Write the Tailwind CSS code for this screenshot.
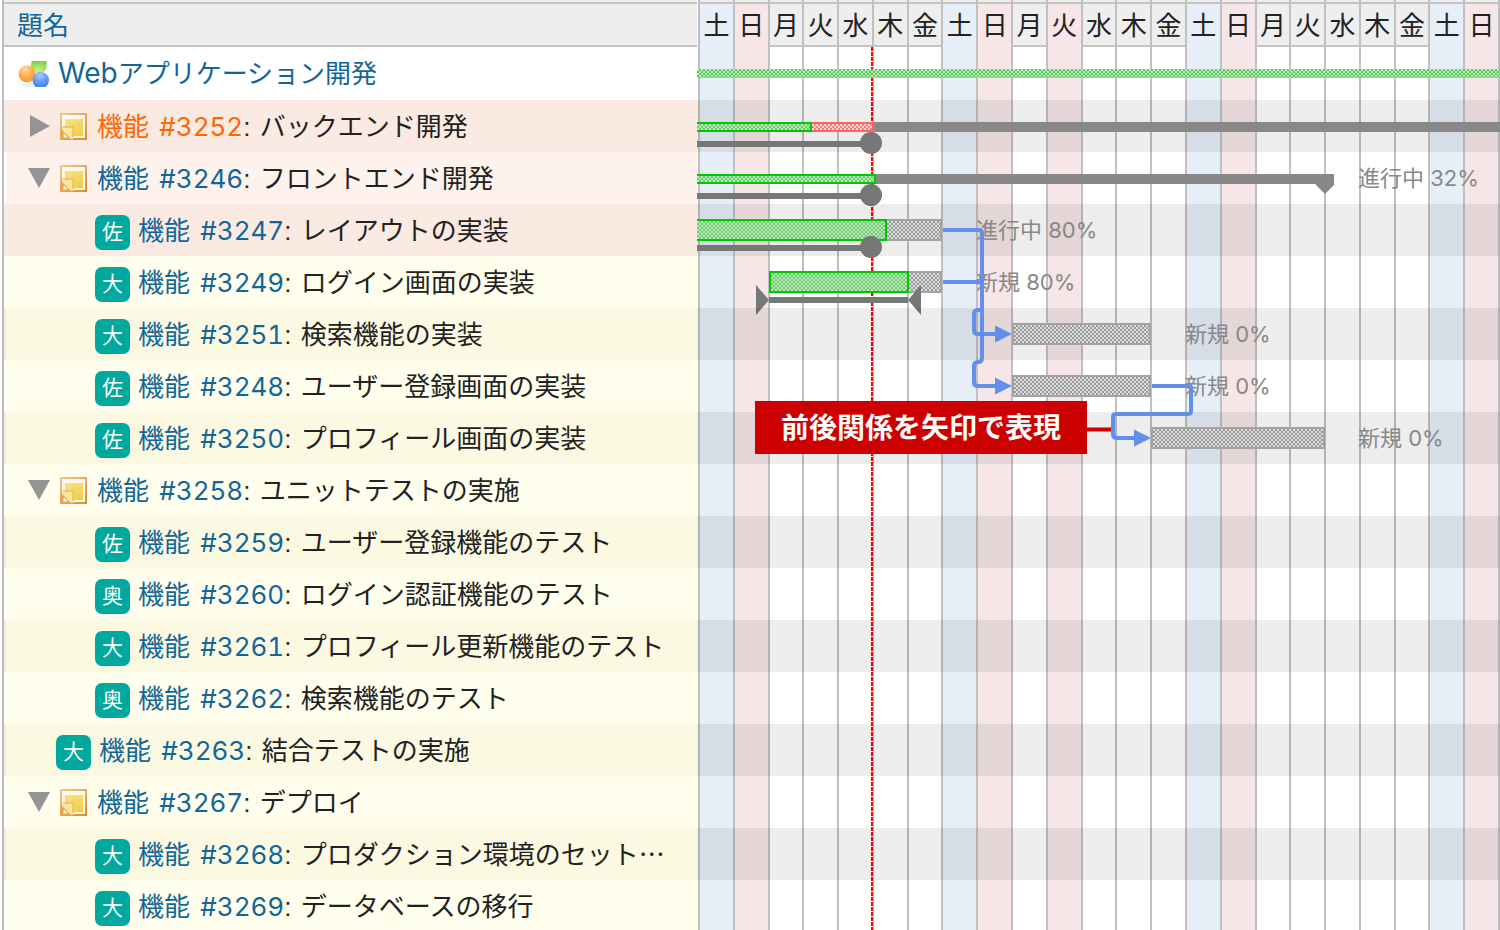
<!DOCTYPE html>
<html lang="ja">
<head>
<meta charset="utf-8">
<title>ガントチャート</title>
<script src="https://cdn.jsdelivr.net/npm/@tailwindcss/browser@4"></script>
</head>
<body class="h-screen overflow-hidden bg-white font-[Inter,'Noto_Sans_CJK_JP',sans-serif] text-[26px] leading-[52px] text-[#222]">
<svg class="absolute h-0 w-0" aria-hidden="true">
  <defs>
    <linearGradient id="noteEdge" x1="0" y1="0" x2="1" y2="1"><stop offset="0" stop-color="#f4c48a"/><stop offset="1" stop-color="#e28a2a"/></linearGradient>
    <linearGradient id="noteFace" x1="0" y1="0" x2="0.6" y2="1"><stop offset="0" stop-color="#fae28c"/><stop offset="1" stop-color="#f2cf48"/></linearGradient>
    <radialGradient id="ballOrange" cx=".4" cy=".25" r=".75"><stop offset="0" stop-color="#ffd9a6"/><stop offset=".6" stop-color="#ffab40"/><stop offset="1" stop-color="#f79a45"/></radialGradient>
    <radialGradient id="ballGreen" cx=".45" cy=".8" r=".8"><stop offset="0" stop-color="#ccf58c"/><stop offset="1" stop-color="#7ccf3c"/></radialGradient>
    <radialGradient id="ballBlue" cx=".45" cy=".25" r=".8"><stop offset="0" stop-color="#a6ccff"/><stop offset=".6" stop-color="#5a97fa"/><stop offset="1" stop-color="#3f7de8"/></radialGradient>
    <symbol id="note" viewBox="0 0 27 27">
      <rect x="1" y="1" width="25" height="25" fill="#fffaf0" stroke="url(#noteEdge)" stroke-width="2"/>
      <path d="M5 6h18v17H12L5 15z" fill="url(#noteFace)"/>
      <path d="M2 14h11v12H2z" fill="#fbe69c"/>
      <path d="M3 14h10v10" fill="none" stroke="#ecb968" stroke-width="1.500"/>
      <path d="M1 16l10 10H1z" fill="#e9a04a"/>
      <path d="M3.500 20l4.500 4.500H3.500z" fill="#fff3d8"/>
    </symbol>
    <symbol id="project" viewBox="0 0 32 28">
      <ellipse cx="15" cy="25" rx="14" ry="2" fill="#000" opacity=".06"/>
      <path d="M14 1h14.500v6q-1 6-7.500 6t-8-6q0-4 1-6z" fill="url(#ballGreen)"/>
      <circle cx="9" cy="14" r="8.500" fill="url(#ballOrange)"/>
      <path d="M14.500 20a8.250 8 0 0 1 16.500 0q0 4-3.500 7h-9.500q-3.500-3-3.500-7z" fill="url(#ballBlue)"/>
    </symbol>
  </defs>
</svg>

<div class="grid min-h-screen grid-cols-[697fr_803fr]">
  <section class="ml-[2px] min-w-0 border-l-2 border-[#bdbdbd]">
    <div class="h-[4px] border-b-2 border-[#c4c4c4] bg-[#eee]"></div>
    <h2 class="h-[43px] border-b-2 border-[#c4c4c4] bg-[#eee] pl-[13px] text-[26px] leading-[43px] font-normal text-[#169]">題名</h2>
    <div class="flex h-[53px] items-center pl-[14px]">
      <svg class="mr-[8px] h-[28px] w-[32px] shrink-0"><use href="#project"/></svg>
      <a href="#project-page" class="truncate text-[#169]"><span class="text-[28px]">Web</span>アプリケーション開発</a>
    </div>
    <ul id="issues"></ul>
  </section>

  <section class="relative min-w-0 overflow-hidden">
    <div id="days" class="absolute inset-y-0 right-[2px] left-[1px] grid grid-cols-[repeat(23,minmax(0,1fr))]"></div>
    <div class="absolute inset-y-0 right-0 w-[2px] bg-[#c0c0c0]"></div>
    <div class="absolute top-[47px] bottom-0 left-[21.670%] w-[2px] bg-[repeating-linear-gradient(#f00_0_4px,#fff_4px_5px)]"></div>
    <div id="rows" class="relative pt-[48px]"></div>
    <svg class="absolute top-0 left-0 h-[930px] w-full" viewBox="697 0 803 930" preserveAspectRatio="none" aria-hidden="true">
      <path d="M1086 429.500H1112" stroke="#c00" stroke-width="4"/>
      <g fill="none" stroke="#628fea" stroke-width="4" stroke-linejoin="round">
        <path d="M943 230H979q3 0 3 3V358q0 4-4 4t-4 4V382q0 4 4 4H997"/>
        <path d="M943 282H982M982 310H978q-4 0-4 4V330q0 4 4 4H997"/>
        <path d="M1152 386H1188q3 0 3 3V411q0 3-3 3H1116q-3 0-3 3V434q0 4 4 4H1136"/>
      </g>
      <path d="M995 325.500V342.500L1012 334zM995 377.500V394.500L1012 386zM1134 429.500V446.500L1151 438z" fill="#628fea"/>
    </svg>
    <div class="absolute top-[401px] left-[7.223%] flex h-[53px] w-[41.345%] items-center justify-center bg-[#c00] text-[28px] font-bold whitespace-nowrap text-white">前後関係を矢印で表現</div>
  </section>
</div>

<script>
const issues = [
  ['closed', 3252, 'バックエンド開発'],
  ['open', 3246, 'フロントエンド開発'],
  ['佐', 3247, 'レイアウトの実装'],
  ['大', 3249, 'ログイン画面の実装'],
  ['大', 3251, '検索機能の実装'],
  ['佐', 3248, 'ユーザー登録画面の実装'],
  ['佐', 3250, 'プロフィール画面の実装'],
  ['open', 3258, 'ユニットテストの実施'],
  ['佐', 3259, 'ユーザー登録機能のテスト'],
  ['奥', 3260, 'ログイン認証機能のテスト'],
  ['大', 3261, 'プロフィール更新機能のテスト'],
  ['奥', 3262, '検索機能のテスト'],
  ['大', 3263, '結合テストの実施', true],
  ['open', 3267, 'デプロイ'],
  ['大', 3268, 'プロダクション環境のセット…'],
  ['大', 3269, 'データベースの移行'],
];
document.getElementById('issues').innerHTML = issues.map(([kind, id, title, top], i) => {
  const bg = i < 3 ? (i % 2 ? 'bg-[#fdf2ec]' : 'bg-[#fbeae2]') : (i % 2 ? 'bg-[#fffeed]' : 'bg-[#fcf9e2]');
  const strip = i % 2 ? 'border-white' : 'border-[#eee]';
  const parent = kind === 'closed' || kind === 'open';
  const arrow = kind === 'closed' ? 'M2 0L22 11L2 22z' : 'M0 1H22L11 21z';
  const lead = parent
    ? `<button type="button" aria-label="展開・折りたたみ" class="ml-[22px] mr-[10px] block h-[22px] w-[22px] shrink-0"><svg class="block h-[22px] w-[22px]" viewBox="0 0 22 22"><path d="${arrow}" fill="#949494"/></svg></button><svg class="mr-[10px] h-[27px] w-[27px] shrink-0"><use href="#note"/></svg>`
    : `<span class="${top ? 'ml-[50px]' : 'ml-[89px]'} mt-1 mr-[8px] flex h-[35px] w-[35px] shrink-0 items-center justify-center rounded-[7px] bg-[#00a99d] text-[21px] text-white">${kind}</span>`;
  const link = kind === 'closed' ? 'text-[#f60]' : 'text-[#169]';
  return `<li class="flex h-[52px] items-center border-l-2 ${strip} ${bg}">${lead}<span class="truncate"><a href="#issue-${id}" class="${link}">機能 <span class="ml-[3px] text-[26px] tabular-nums">#${id}</span></a><span class="font-['Liberation_Sans',sans-serif]">: </span><span class="ml-[2px] font-['Noto_Sans_CJK_JP',sans-serif]">${title}</span></span></li>`;
}).join('');

document.getElementById('days').innerHTML = Array.from({ length: 23 }, (_, i) => {
  const name = '土日月火水木金'[i % 7];
  const holiday = i % 7 === 1 || i === 10;
  const bg = holiday ? 'bg-[#f6e6e8]' : i % 7 === 0 ? 'bg-[#e6eef8]' : '';
  const head = bg ? 'border-transparent' : 'border-[#c4c4c4] bg-[#eee]';
  return `<div class="border-l-2 border-[#c0c0c0] ${bg}"><div class="h-[4px] border-b-2 border-[#c4c4c4] bg-[#eee]"></div><div class="h-[43px] border-b-2 text-center leading-[43px] ${head}">${name}</div></div>`;
}).join('');

// Chart positions are given on a scale from 697 to 1500.
const pct = n => (n / 803 * 100).toFixed(3) + '%';
const box = (cls, x1, x2) => `<div class="absolute ${cls}" style="left:${pct(x1 - 697)};width:${pct(x2 - x1)}"></div>`;
const GREEN = 'border-[#00c800] bg-[repeating-conic-gradient(#67d367_0_25%,#c3dfc3_0_50%)] bg-size-[4px_4px]';
const GRAY = 'border-[#a3a3a3] bg-[repeating-conic-gradient(#9a9a9a_0_25%,#dcdcdc_0_50%)] bg-size-[4px_4px]';
const RED = 'border-[#ff6464] bg-[repeating-conic-gradient(#ff7a7a_0_25%,#ffdada_0_50%)] bg-size-[4px_4px]';
const plan = (a, b) => box('top-[41px] h-[6px] bg-[#777]', a, b);
const dot = `<div class="absolute top-[32px] h-[22px] w-[22px] -translate-x-1/2 rounded-full bg-[#777]" style="left:${pct(174.5)}"></div>`;
const label = (x, t) => `<span class="absolute top-0 text-[22px] leading-[52px] whitespace-nowrap text-[#888]" style="left:${pct(x - 697)}">${t}</span>`;
const tip = (x, w, h, top, d) => `<svg class="absolute ${top}" width="${w}" height="${h}" style="left:${pct(x - 697)}"><path d="${d}" fill="#777"/></svg>`;
const task = (a, b) => box('top-[15px] h-[22px] border-2 ' + GRAY, a, b);
const bars = [
  box('top-[21px] h-[9px] bg-[repeating-conic-gradient(#4fd24f_0_25%,#c3e6c3_0_50%)] bg-size-[4px_4px]', 697, 1500),
  box('top-[22px] h-[10px] border-y-2 border-r-2 ' + GREEN, 697, 812) + box('top-[22px] h-[10px] border-y-2 border-r-2 ' + RED, 812, 874) + box('top-[22px] h-[10px] bg-[#888]', 874, 1500) + plan(697, 871) + dot,
  box('top-[22px] h-[10px] border-y-2 border-r-2 ' + GREEN, 697, 876) + box('top-[22px] h-[10px] bg-[#888]', 876, 1334) + `<svg class="absolute top-[22px]" width="18" height="20" style="left:${pct(619)}"><path d="M0 0H18V11L9 20L0 11z" fill="#888"/></svg>` + plan(697, 871) + dot + label(1358, '進行中 32%'),
  task(885, 942) + box('top-[15px] h-[22px] border-y-2 border-r-2 ' + GREEN, 697, 887) + plan(697, 871) + dot + label(976, '進行中 80%'),
  task(907, 942) + box('top-[15px] h-[22px] border-2 ' + GREEN, 769, 909) + plan(769, 908) + tip(756, 13, 30, 'top-[29px]', 'M0 0L13 15L0 30z') + tip(908, 13, 30, 'top-[29px]', 'M13 0L0 15L13 30z') + label(976, '新規 80%'),
  task(1012, 1151) + label(1185, '新規 0%'),
  task(1012, 1151) + label(1185, '新規 0%'),
  task(1151, 1325) + label(1358, '新規 0%'),
];
document.getElementById('rows').innerHTML = Array.from({ length: 17 }, (_, i) =>
  `<div class="relative h-[52px] ${i % 2 ? 'bg-black/7' : ''}">${bars[i] || ''}</div>`).join('');
</script>
</body>
</html>
